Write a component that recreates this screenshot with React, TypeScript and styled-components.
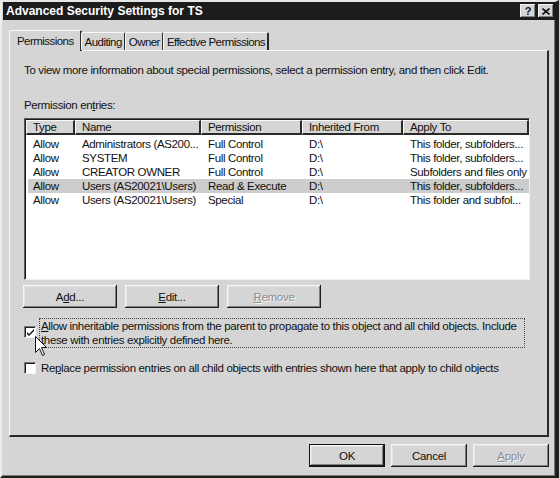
import React from 'react';
import styled, { createGlobalStyle } from 'styled-components';

const GlobalStyle = createGlobalStyle`
  html, body {
    margin: 0;
    padding: 0;
    background: #d5d5d5;
  }
  * {
    box-sizing: border-box;
  }
`;

const FACE = '#d5d5d5';

const Window = styled.div`
  position: relative;
  width: 559px;
  height: 478px;
  background: ${FACE};
  border-top: 2px solid #e6e6e6;
  border-left: 2px solid #ececec;
  border-right: 4px solid #1e1e1e;
  border-bottom: 2px solid #1e1e1e;
  box-shadow: inset -1px -1px 0 #7a7a7a;
  display: flex;
  flex-direction: column;
  font-family: 'Liberation Sans', Arial, sans-serif;
  font-size: 11px;
  color: #111;
`;

const TitleBar = styled.div`
  height: 18px;
  margin: 0 0 0 1px;
  background: #1c1c1c;
  display: flex;
  align-items: center;
  justify-content: space-between;
  padding: 0 1px 0 3px;
`;

const Title = styled.span`
  color: #fff;
  font-weight: bold;
  font-size: 12px;
  letter-spacing: 0;
`;

const TitleButtons = styled.div`
  display: flex;
  gap: 2px;
`;

const TitleButton = styled.div`
  width: 16px;
  height: 14px;
  background: ${FACE};
  box-shadow: inset -1px -1px 0 #202020, inset 1px 1px 0 #f4f4f4,
    inset -2px -2px 0 #808080;
  display: flex;
  align-items: center;
  justify-content: center;
  font-weight: bold;
  font-size: 11px;
  color: #111;
`;

const Body = styled.div`
  flex: 1;
  display: flex;
  flex-direction: column;
  padding: 10px 6px 0 7px;
`;

const Tabs = styled.div`
  display: flex;
  align-items: flex-end;
  height: 20px;
  position: relative;
  z-index: 1;
`;

const Tab = styled.div<{ $active?: boolean }>`
  height: ${(p) => (p.$active ? '21px' : '18px')};
  margin-bottom: ${(p) => (p.$active ? '-1px' : '0')};
  padding: 0 ${(p) => (p.$active ? '6px 0 7px' : '2px 0 3px')};
  margin-left: ${(p) => (p.$active ? '0' : '-1px')};
  background: ${FACE};
  border-top: 1px solid #fafafa;
  border-left: 1px solid #fafafa;
  border-right: 2px solid #2a2a2a;
  border-radius: 2px 2px 0 0;
  display: flex;
  align-items: center;
  font-size: 11.5px;
  letter-spacing: -0.55px;
  white-space: nowrap;
`;

const Panel = styled.div`
  height: 387px;
  border-top: 1px solid #fafafa;
  border-left: 1px solid #fafafa;
  border-right: 2px solid #2a2a2a;
  border-bottom: 2px solid #2a2a2a;
  padding: 12px 12px 0 14px;
  display: flex;
  flex-direction: column;
`;

const Text = styled.div`
  line-height: 14px;
  font-size: 11.5px;
  letter-spacing: -0.35px;
  white-space: nowrap;
`;

const Intro = styled(Text)`
  margin-bottom: 21px;
`;

const ListLabel = styled(Text)`
  margin-bottom: 6px;
`;

const ListBox = styled.div`
  width: 506px;
  height: 162px;
  background: #fff;
  border-top: 1px solid #5a5a5a;
  border-left: 1px solid #5a5a5a;
  border-right: 1px solid #f0f0f0;
  border-bottom: 1px solid #f0f0f0;
  box-shadow: inset 1px 1px 0 #1a1a1a;
  padding: 1px 0 0 1px;
`;

const COLS = '49px 126px 101px 101px 1fr';

const HeaderRow = styled.div`
  display: grid;
  grid-template-columns: ${COLS};
  height: 15px;
  margin-bottom: 2px;
`;

const HeaderCell = styled.div`
  background: ${FACE};
  border-top: 1px solid #fafafa;
  border-left: 1px solid #fafafa;
  border-right: 2px solid #2a2a2a;
  border-bottom: 2px solid #2a2a2a;
  padding: 0 0 0 6px;
  line-height: 12px;
  font-size: 11.5px;
  letter-spacing: -0.35px;
  white-space: nowrap;
  overflow: hidden;
`;

const Row = styled.div<{ $selected?: boolean }>`
  display: grid;
  grid-template-columns: ${COLS};
  height: 14px;
  line-height: 14px;
  margin-left: 2px;
  background: ${(p) => (p.$selected ? '#cdcdcd' : 'transparent')};
`;

const Cell = styled.div`
  padding-left: 5px;
  font-size: 11.5px;
  letter-spacing: -0.35px;
  white-space: nowrap;
  overflow: hidden;
`;

const ButtonRow = styled.div<{ $gap: number }>`
  display: flex;
  gap: ${(p) => p.$gap}px;
`;

const ListButtons = styled(ButtonRow)`
  margin: 5px 0 0 -1px;
`;

const Button = styled.div<{ $width: number; $default?: boolean; $disabled?: boolean }>`
  width: ${(p) => p.$width}px;
  height: 23px;
  background: ${FACE};
  border: ${(p) => (p.$default ? '1px solid #111' : 'none')};
  box-shadow: inset -1px -1px 0 #1e1e1e, inset 1px 1px 0 #f6f6f6,
    inset -2px -2px 0 #808080, inset 2px 2px 0 #e2e2e2;
  display: flex;
  align-items: center;
  justify-content: center;
  font-size: 11.5px;
  letter-spacing: -0.3px;
  color: ${(p) => (p.$disabled ? '#8c8c8c' : '#111')};
  text-shadow: ${(p) => (p.$disabled ? '1px 1px 0 #f8f8f8' : 'none')};
`;

const CheckRow = styled.div<{ $top: number }>`
  display: flex;
  align-items: flex-start;
  margin-top: ${(p) => p.$top}px;
`;

const Checkbox = styled.div<{ $offset?: number }>`
  width: 12px;
  height: 12px;
  margin: ${(p) => p.$offset ?? 1}px 4px 0 0;
  background: #fff;
  border-top: 1px solid #7a7a7a;
  border-left: 1px solid #7a7a7a;
  border-right: 1px solid #f2f2f2;
  border-bottom: 1px solid #f2f2f2;
  box-shadow: inset 1px 1px 0 #1e1e1e;
  display: flex;
  align-items: center;
  justify-content: center;
`;

const CheckLabel = styled.div`
  width: 482px;
  padding: 0 0 0 1px;
  line-height: 14px;
  font-size: 11.5px;
  letter-spacing: -0.35px;
`;

const FocusBox = styled.div`
  border: 1px dotted #444;
  padding: 0 2px 0 0;
  margin: -1px 0 0 -1px;
`;

const Footer = styled(ButtonRow)`
  justify-content: flex-end;
  margin-top: 7px;
`;

const Cursor = styled.svg`
  position: absolute;
  left: 33px;
  top: 334px;
`;

const rows = [
  ['Allow', 'Administrators (AS200...', 'Full Control', 'D:\\', 'This folder, subfolders...'],
  ['Allow', 'SYSTEM', 'Full Control', 'D:\\', 'This folder, subfolders...'],
  ['Allow', 'CREATOR OWNER', 'Full Control', 'D:\\', 'Subfolders and files only'],
  ['Allow', 'Users (AS20021\\Users)', 'Read & Execute', 'D:\\', 'This folder, subfolders...'],
  ['Allow', 'Users (AS20021\\Users)', 'Special', 'D:\\', 'This folder and subfol...'],
];

const headers = ['Type', 'Name', 'Permission', 'Inherited From', 'Apply To'];

const Check = () => (
  <svg width="9" height="9" viewBox="0 0 9 9">
    <path d="M1 4 L3 6 L8 1 L8 3 L3 8 L1 6 Z" fill="#111" />
  </svg>
);

export default function App() {
  return (
    <>
      <GlobalStyle />
      <Window>
        <TitleBar>
          <Title>Advanced Security Settings for TS</Title>
          <TitleButtons>
            <TitleButton>?</TitleButton>
            <TitleButton>
              <svg width="8" height="7" viewBox="0 0 8 7">
                <path d="M0.5 0.5 L7.5 6.5 M7.5 0.5 L0.5 6.5" stroke="#111" strokeWidth="1.6" />
              </svg>
            </TitleButton>
          </TitleButtons>
        </TitleBar>
        <Body>
          <Tabs>
            <Tab $active>Permissions</Tab>
            <Tab>Auditing</Tab>
            <Tab>Owner</Tab>
            <Tab>Effective Permissions</Tab>
          </Tabs>
          <Panel>
            <Intro>
              To view more information about special permissions, select a permission entry, and then click Edit.
            </Intro>
            <ListLabel>
              Permission en<u>t</u>ries:
            </ListLabel>
            <ListBox>
              <HeaderRow>
                {headers.map((h) => (
                  <HeaderCell key={h}>{h}</HeaderCell>
                ))}
              </HeaderRow>
              {rows.map((r, i) => (
                <Row key={i} $selected={i === 3}>
                  {r.map((c, j) => (
                    <Cell key={j}>{c}</Cell>
                  ))}
                </Row>
              ))}
            </ListBox>
            <ListButtons $gap={8}>
              <Button $width={94}>
                <span>
                  A<u>d</u>d...
                </span>
              </Button>
              <Button $width={94}>
                <span>
                  <u>E</u>dit...
                </span>
              </Button>
              <Button $width={94} $disabled>
                <span>
                  <u>R</u>emove
                </span>
              </Button>
            </ListButtons>
            <CheckRow $top={11}>
              <Checkbox $offset={7}>
                <Check />
              </Checkbox>
              <FocusBox>
                <CheckLabel>
                  <u>A</u>llow inheritable permissions from the parent to propagate to this object and all child objects. Include
                  these with entries explicitly defined here.
                </CheckLabel>
              </FocusBox>
            </CheckRow>
            <CheckRow $top={13}>
              <Checkbox />
              <CheckLabel>
                Re<u>p</u>lace permission entries on all child objects with entries shown here that apply to child objects
              </CheckLabel>
            </CheckRow>
          </Panel>
          <Footer $gap={6}>
            <Button $width={76} $default>
              OK
            </Button>
            <Button $width={76}>Cancel</Button>
            <Button $width={76} $disabled>
              <span>
                <u>A</u>pply
              </span>
            </Button>
          </Footer>
        </Body>
        <Cursor width="13" height="21" viewBox="0 0 13 21">
          <path
            d="M0.5 0.5 L0.5 16.5 L4.5 12.5 L7.5 19.5 L9.5 18.5 L6.5 11.5 L11.5 11.5 Z"
            fill="#fff"
            stroke="#111"
            strokeWidth="1"
          />
        </Cursor>
      </Window>
    </>
  );
}
